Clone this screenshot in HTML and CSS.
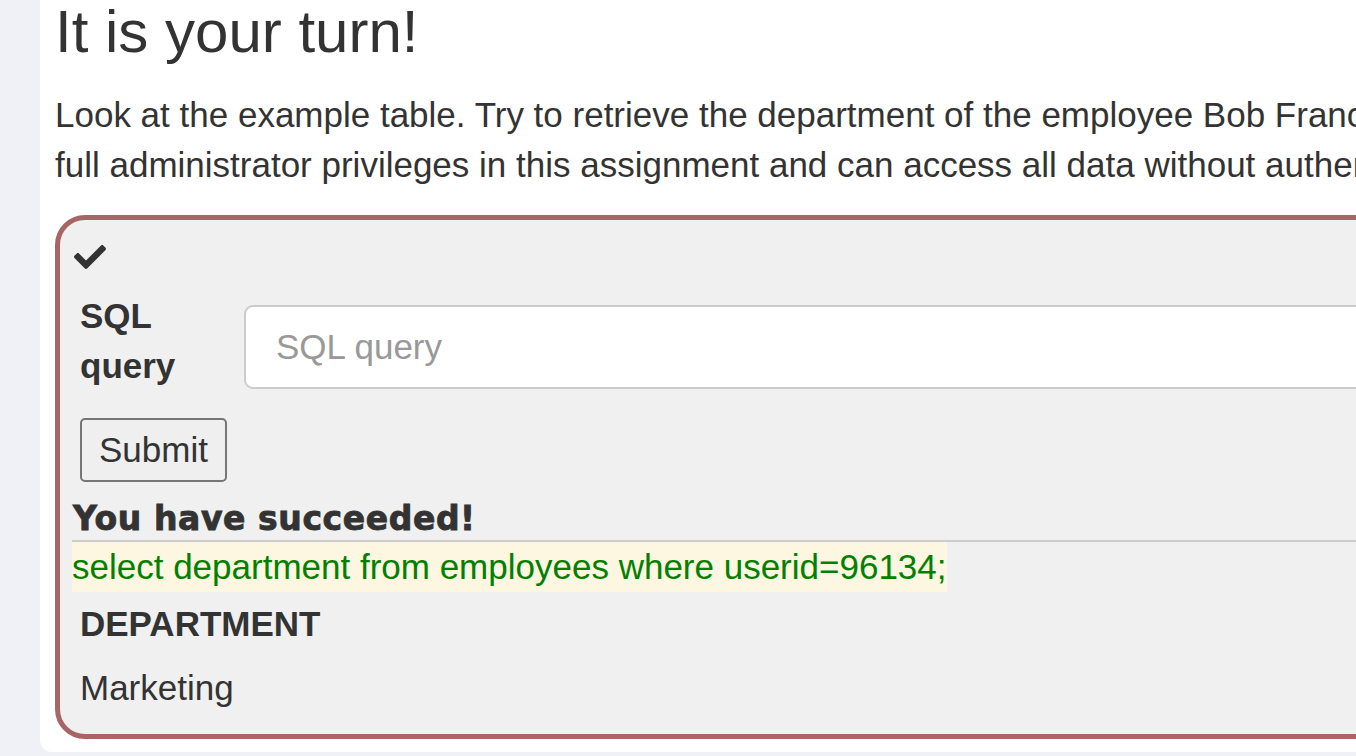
FILE: index.html
```html
<!DOCTYPE html>
<html>
<head>
<meta charset="utf-8">
<title>SQL Injection</title>
<link rel="stylesheet" href="styles.css">
</head>
<body>
<div class="page">
  <main class="panel">
    <h2 class="title">It is your turn!</h2>
    <p class="intro">Look at the example table. Try to retrieve the department of the employee Bob Franco. Note that you have been granted<br>full administrator privileges in this assignment and can access all data without authentication.</p>
    <section class="attack">
      <div class="status">
        <svg class="check" viewBox="0 64 512 384" width="32" height="24" aria-hidden="true"><path fill="#333" d="M173.898 439.404l-166.4-166.4c-9.997-9.997-9.997-26.206 0-36.204l36.203-36.204c9.997-9.998 26.207-9.998 36.204 0L192 312.69 432.095 72.596c9.997-9.997 26.207-9.997 36.204 0l36.203 36.204c9.997 9.997 9.997 26.206 0 36.204l-294.4 294.401c-9.998 9.997-26.207 9.997-36.204-.001z"/></svg>
      </div>
      <form class="form">
        <div class="form-row">
          <label class="label" for="q">SQL<br>query</label>
          <input class="query" id="q" type="text" placeholder="SQL query">
        </div>
        <div class="actions">
          <button class="submit" type="button">Submit</button>
        </div>
      </form>
      <div class="output">
        <div class="feedback">You have succeeded!</div>
        <div class="sql-line"><span class="sql">select department from employees where userid=96134;</span></div>
        <table class="result">
          <thead><tr><th>DEPARTMENT</th></tr></thead>
          <tbody><tr><td>Marketing</td></tr></tbody>
        </table>
      </div>
    </section>
  </main>
</div>
</body>
</html>
```

FILE: styles.css
```css
html, body {
  margin: 0;
  padding: 0;
}
body {
  background: #eff1f6;
  font-family: "Liberation Sans", Arial, sans-serif;
  color: #333;
  overflow: hidden;
  width: 1356px;
  height: 756px;
}
.page {
  display: flex;
  padding-left: 40px;
}
.panel {
  background: #fff;
  width: 1600px;
  flex: none;
  height: 752px;
  border-bottom-left-radius: 12px;
  padding-left: 15px;
  box-sizing: border-box;
}
.title {
  margin: -1px 0 0;
  font-size: 60px;
  font-weight: 400;
  line-height: 66px;
}
.intro {
  margin: 25px 0 25px;
  font-size: 35px;
  line-height: 50px;
  white-space: nowrap;
}
.attack {
  width: 1500px;
  height: 524px;
  box-sizing: border-box;
  border: 5px solid #a86565;
  border-radius: 30px;
  background: #f0f0f0;
  padding: 25px 0 0 12px;
}
.status {
  height: 24px;
  padding-left: 2px;
}
.check {
  display: block;
}
.form-row {
  display: flex;
  align-items: flex-start;
  margin-top: 22px;
}
.label {
  font-size: 35px;
  font-weight: 700;
  line-height: 50px;
  width: 164px;
  padding-left: 8px;
  flex: none;
}
.query {
  margin-top: 14px;
  height: 84px;
  width: 1300px;
  box-sizing: border-box;
  border: 2px solid #cbcbcb;
  border-radius: 9px;
  background: #fff;
  padding: 0 30px;
  font-family: "Liberation Sans", Arial, sans-serif;
  font-size: 35px;
  color: #555;
}
.query::placeholder {
  color: #999;
}
.actions {
  padding: 27px 0 0 8px;
}
.submit {
  height: 64px;
  box-sizing: border-box;
  padding: 0 17px;
  border: 2px solid #767676;
  border-radius: 5px;
  background: #efefef;
  font-family: "Liberation Sans", Arial, sans-serif;
  font-size: 35px;
  color: #333;
}
.feedback {
  margin-top: 16px;
  font-family: "DejaVu Sans", sans-serif;
  font-weight: 700;
  font-size: 33px;
  letter-spacing: 0.6px;
  -webkit-text-stroke: 0.9px #333;
  line-height: 42px;
  padding-left: 1px;
  color: #333;
  border-bottom: 2px solid #cccccc;
}
.sql-line {
  line-height: 50px;
  font-size: 35px;
}
.sql {
  display: inline-block;
  background: #fdf6e0;
  color: #028002;
}
.result {
  border-collapse: collapse;
  margin-top: 0;
}
.result th {
  text-align: left;
  font-size: 35px;
  line-height: 50px;
  font-weight: 700;
  padding: 7px 8px 7px 8px;
}
.result td {
  font-size: 35px;
  line-height: 50px;
  padding: 7px 8px 21px 8px;
}
```
